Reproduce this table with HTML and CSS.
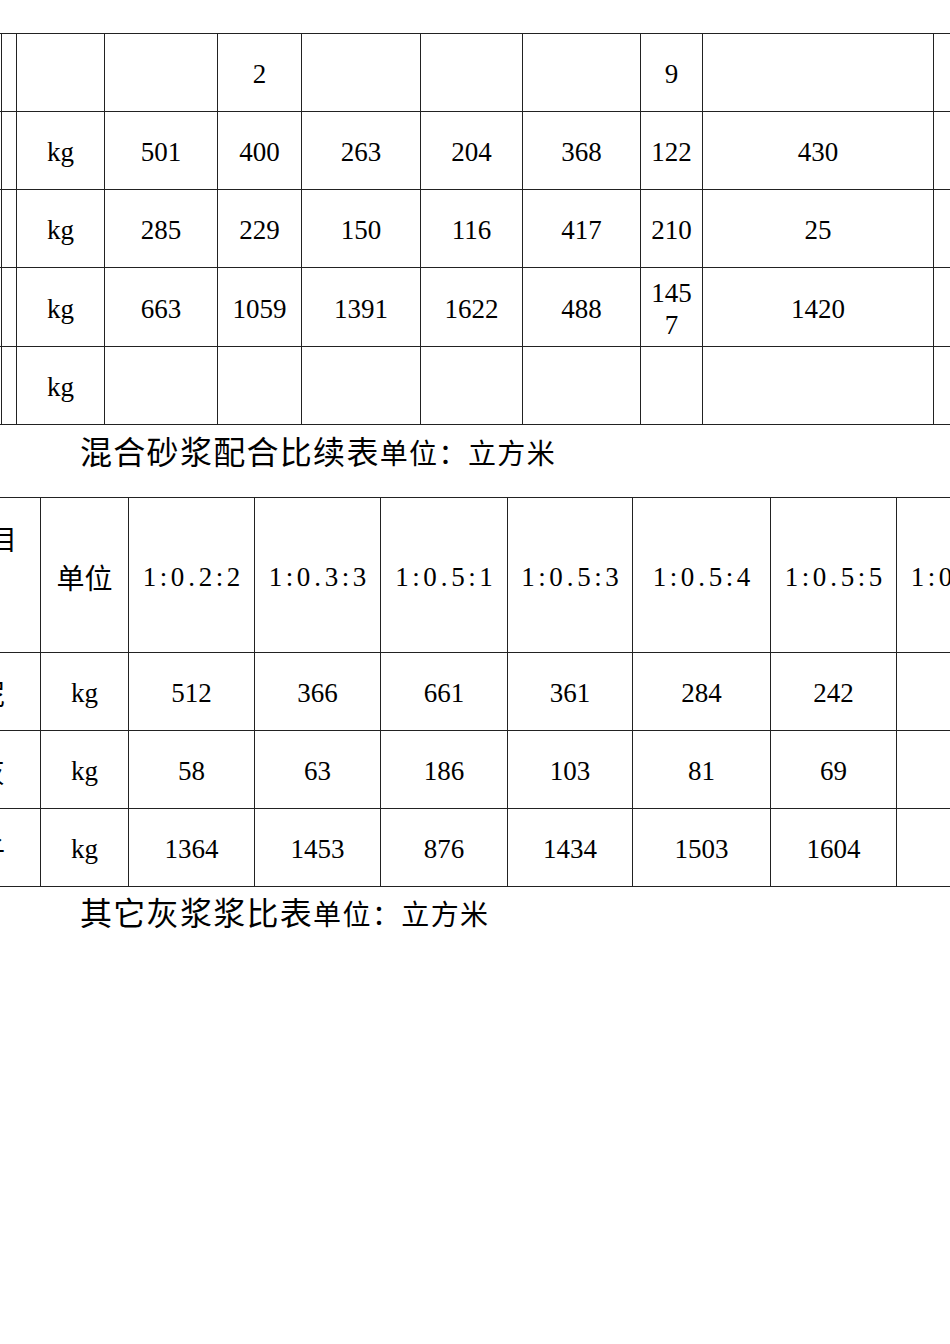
FILE: index.html
```html
<!DOCTYPE html>
<html lang="zh-CN">
<head>
<meta charset="utf-8">
<title>混合砂浆配合比续表</title>
<link rel="stylesheet" href="styles.css">
</head>
<body>
<div class="page">
  <table class="grid t1">
    <colgroup>
      <col class="w60"><col class="w15"><col class="w88"><col class="w113"><col class="w84"><col class="w119"><col class="w102"><col class="w118"><col class="w62"><col class="w231"><col class="w60">
    </colgroup>
    <tbody>
      <tr><td></td><td></td><td></td><td></td><td>2</td><td></td><td></td><td></td><td>9</td><td></td><td></td></tr>
      <tr><td></td><td></td><td>kg</td><td>501</td><td>400</td><td>263</td><td>204</td><td>368</td><td>122</td><td>430</td><td></td></tr>
      <tr><td></td><td></td><td>kg</td><td>285</td><td>229</td><td>150</td><td>116</td><td>417</td><td>210</td><td>25</td><td></td></tr>
      <tr class="tall"><td></td><td></td><td>kg</td><td>663</td><td>1059</td><td>1391</td><td>1622</td><td>488</td><td>145<br>7</td><td>1420</td><td></td></tr>
      <tr><td></td><td></td><td>kg</td><td></td><td></td><td></td><td></td><td></td><td></td><td></td><td></td></tr>
    </tbody>
  </table>

  <p class="title">混合砂浆配合比续表<span class="sub">单位：立方米</span></p>

  <table class="grid t2">
    <colgroup>
      <col class="w100"><col class="w88"><col class="w126"><col class="w126"><col class="w127"><col class="w125"><col class="w138"><col class="w126"><col class="w126">
    </colgroup>
    <tbody>
      <tr class="head">
        <td class="item item-head zh">项目</td>
        <td class="zh">单位</td>
        <td><span class="ratio"><span>1</span><span>:</span><span>0</span><span>.</span><span>2</span><span>:</span><span>2</span></span></td>
        <td><span class="ratio"><span>1</span><span>:</span><span>0</span><span>.</span><span>3</span><span>:</span><span>3</span></span></td>
        <td><span class="ratio"><span>1</span><span>:</span><span>0</span><span>.</span><span>5</span><span>:</span><span>1</span></span></td>
        <td><span class="ratio"><span>1</span><span>:</span><span>0</span><span>.</span><span>5</span><span>:</span><span>3</span></span></td>
        <td><span class="ratio"><span>1</span><span>:</span><span>0</span><span>.</span><span>5</span><span>:</span><span>4</span></span></td>
        <td><span class="ratio"><span>1</span><span>:</span><span>0</span><span>.</span><span>5</span><span>:</span><span>5</span></span></td>
        <td><span class="ratio"><span>1</span><span>:</span><span>0</span><span>.</span><span>5</span><span>:</span><span>6</span></span></td>
      </tr>
      <tr><td class="item zh">水泥</td><td>kg</td><td>512</td><td>366</td><td>661</td><td>361</td><td>284</td><td>242</td><td></td></tr>
      <tr><td class="item zh">石灰</td><td>kg</td><td>58</td><td>63</td><td>186</td><td>103</td><td>81</td><td>69</td><td></td></tr>
      <tr><td class="item zh">砂子</td><td>kg</td><td>1364</td><td>1453</td><td>876</td><td>1434</td><td>1503</td><td>1604</td><td></td></tr>
    </tbody>
  </table>

  <p class="title title2">其它灰浆浆比表<span class="sub">单位：立方米</span></p>
</div>
</body>
</html>
```

FILE: styles.css
```css
html, body {
  margin: 0;
  padding: 0;
  background: #fff;
}

body {
  font-family: "Liberation Serif", "Times New Roman", "Noto Sans CJK SC", serif;
  color: #000;
}

.page {
  width: 950px;
  height: 1344px;
  overflow: hidden;
  padding-top: 33px;
  box-sizing: border-box;
}

.grid {
  border-collapse: collapse;
  table-layout: fixed;
  font-size: 27px;
}

.grid td {
  border: 1px solid #222;
  padding: 3px 0 0 0;
  text-align: center;
  vertical-align: middle;
  line-height: 32px;
  overflow: hidden;
  white-space: nowrap;
}

.t1 {
  width: 1052px;
  margin-left: -59px;
}

.t1 tr {
  height: 78px;
}

.t1 tr.tall {
  height: 79px;
}

.t2 {
  width: 1082px;
  margin-left: -60px;
}

.t2 tr {
  height: 78px;
}

.t2 tr.head {
  height: 155px;
}

.w15 { width: 15px; }
.w60 { width: 60px; }
.w62 { width: 62px; }
.w84 { width: 84px; }
.w88 { width: 88px; }
.w100 { width: 100px; }
.w102 { width: 102px; }
.w113 { width: 113px; }
.w118 { width: 118px; }
.w119 { width: 119px; }
.w125 { width: 125px; }
.w126 { width: 126px; }
.w127 { width: 127px; }
.w138 { width: 138px; }
.w231 { width: 231px; }

.zh {
  font-family: "Noto Sans CJK SC", sans-serif;
  font-size: 28px;
}

.grid td.item {
  text-align: right;
  padding-right: 35px;
}

.grid td.item-head {
  vertical-align: top;
  padding-top: 24px;
  padding-right: 23px;
}

.ratio {
  display: inline-block;
  white-space: nowrap;
}

.ratio span {
  display: inline-block;
  width: 14px;
  text-align: center;
}

.title {
  margin: 0 0 22px 0;
  padding-left: 80px;
  font-family: "Noto Sans CJK SC", sans-serif;
  font-size: 32px;
  font-weight: 400;
  line-height: 50px;
  letter-spacing: 1.3px;
  white-space: nowrap;
}

.title .sub {
  font-size: 28px;
  line-height: 1;
  letter-spacing: 1.4px;
}

.title2 {
  margin-top: -1px;
}
```
